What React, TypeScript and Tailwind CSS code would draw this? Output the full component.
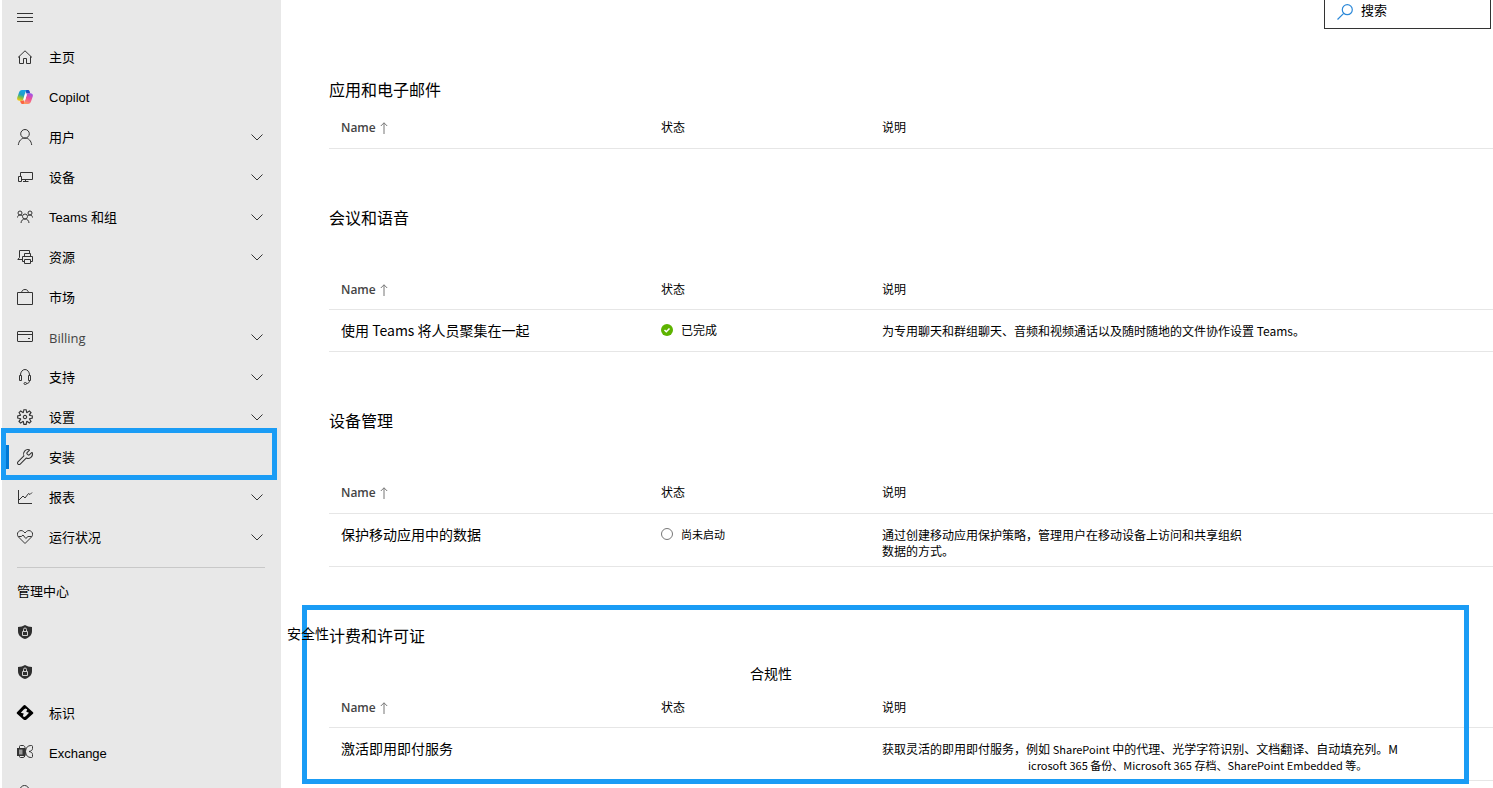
import clsx from "clsx";
import { Wrench } from "lucide-react";
import type { ReactNode } from "react";
import { VscGear } from "react-icons/vsc";

type NavItem = {
  label: string;
  icon: ReactNode;
  expandable?: boolean;
  active?: boolean;
  className?: string;
};

type Setup = {
  name: string;
  status?: "done" | "idle";
  detail: ReactNode;
};

type Section = {
  title: string;
  rows: Setup[];
  compact?: boolean;
  highlighted?: boolean;
};

function Line({ children }: { children: ReactNode }) {
  return (
    <svg className="h-4 w-4" viewBox="0 0 16 16" fill="none" stroke="#333" strokeWidth="1" aria-hidden="true">
      {children}
    </svg>
  );
}

function Copilot() {
  return (
    <svg className="h-4 w-4" viewBox="0 0 16 16" aria-hidden="true">
      <defs>
        <linearGradient id="cpl" x1="0.6" y1="0" x2="0.3" y2="1">
          <stop offset="0" stopColor="#1aa5e8" />
          <stop offset="0.45" stopColor="#1f9fc4" />
          <stop offset="0.7" stopColor="#7cc04a" />
          <stop offset="1" stopColor="#f5c80f" />
        </linearGradient>
        <linearGradient id="cpr" x1="0.7" y1="0" x2="0.3" y2="1">
          <stop offset="0" stopColor="#a052e8" />
          <stop offset="0.45" stopColor="#ee5299" />
          <stop offset="1" stopColor="#ff9a5c" />
        </linearGradient>
      </defs>
      <path d="M8 1h3c1 0 1.400.6 1.700 1.500L13.200 4.500H9.500L8 1Z" fill="#1c4fc4" />
      <path d="M8 15H5.500c-1 0-1.600-.6-1.900-1.500L3 11.500h4l1 3.500Z" fill="#fb6340" />
      <path d="M5 1h5c-.9.300-1.300 1-1.600 2L6.300 10C6 11 5.300 11.700 4.300 11.700H2.500C.8 11.700-.2 10.400.2 8.700L2 3.500C2.500 1.900 3.400 1 5 1Z" fill="url(#cpl)" />
      <path d="M11 15H6c.9-.3 1.300-1 1.600-2l2.100-7C10 5 10.700 4.300 11.700 4.300h1.800c1.700 0 2.700 1.300 2.300 3L14 12.500c-.5 1.600-1.400 2.500-3 2.500Z" fill="url(#cpr)" />
      <path d="M8.700 6 7.600 10" stroke="#fff" strokeWidth="1.800" strokeLinecap="round" />
    </svg>
  );
}

function Shield() {
  return (
    <svg className="h-4 w-4" viewBox="0 0 16 16" aria-hidden="true">
      <path d="M8 1c2 1.300 4.200 1.800 7 1.900V7c0 4-2.500 6.500-7 8-4.500-1.500-7-4-7-8V2.900C3.800 2.800 6 2.300 8 1Z" fill="#2f2f2f" />
      <path d="M5.500 7.500h5v4h-5zM6.500 7.500V5.500a1.500 1.500 0 0 1 3 0v2" fill="none" stroke="#d0d0d0" strokeWidth="1" />
    </svg>
  );
}

function Identity() {
  return (
    <svg className="-ml-px h-[18px] w-[18px]" viewBox="0 0 18 18" aria-hidden="true">
      <path
        d="M9 2 17 9.200c.5.500.5 1.100 0 1.600L10.500 16.500c-.9.700-2.100.7-3 0L1 10.800c-.5-.5-.5-1.100 0-1.600L7.500 2.500C8 2 8.500 1.800 9 2Z"
        fill="#000"
      />
      <path d="m9.300 5.500 1.900.7-.9 2.600 2.700 1-3 3.200-1.600.9-1.600-.7.9-2.700-2.900-.8 3-3.300Z" fill="#e8e8e8" />
    </svg>
  );
}

function Exchange() {
  return (
    <svg className="h-4 w-4" viewBox="0 0 16 16" aria-hidden="true">
      <path d="M2.500 4V2.500c0-.6.4-1 1-1H6c1.800 0 2.500 2.500 2.500 6s-.7 6-2.500 6H3.500c-.6 0-1-.4-1-1V12" fill="none" stroke="#333" />
      <path
        d="M8.500 7.500c.5-4 2-6 6-6 .6 0 1 .4 1 1V4.500c0 1.500-1 2.500-3.500 3 2.500.5 3.500 1.500 3.500 3v2c0 .6-.4 1-1 1-4 0-5.500-2-6-6Z"
        fill="none"
        stroke="#333"
      />
      <path d="M0 4h8v8H0z" fill="#333" />
      <path d="M2 5.500h3.500v5H2z" fill="#999" />
    </svg>
  );
}

const NAV: NavItem[] = [
  {
    label: "主页",
    icon: <Line><path d="M1 8.500 8 1.800l7 6.700M2.500 7.300v7.200h4v-5h3v5h4V7.300" /></Line>,
  },
  { label: "Copilot", icon: <Copilot /> },
  {
    label: "用户",
    expandable: true,
    icon: <Line><circle cx="8" cy="4.800" r="4.300" /><path d="M1.300 16c.5-4.200 3-6.900 6.700-6.900s6.200 2.700 6.700 6.900" /></Line>,
  },
  {
    label: "设备",
    expandable: true,
    icon: <Line><path d="M3.500 7.500v-4h12v7h-11M1.500 7.500h3v5h-3zM6 12.500h5.500M8.500 10.500v2" /></Line>,
  },
  {
    label: "Teams 和组",
    expandable: true,
    icon: (
      <Line>
        <circle cx="3" cy="4" r="2" />
        <circle cx="13" cy="4" r="2" />
        <circle cx="8" cy="7.500" r="2.500" />
        <path d="M.5 8.500C.6 7 1.500 6 3 6c1 0 1.700.4 2.200 1M15.500 8.500C15.400 7 14.500 6 13 6c-1 0-1.700.4-2.200 1M4 14c.2-2.500 1.700-4 4-4s3.800 1.500 4 4" />
      </Line>
    ),
  },
  {
    label: "资源",
    expandable: true,
    icon: (
      <Line>
        <path d="M12.500 4V1.500h-10v7L.8 10.500H5" />
        <path d="M7.500 7.500v-3h6v3M7.500 12.500h-2v-5h10v5h-2M7.500 10.500h6v4h-6z" />
      </Line>
    ),
  },
  {
    label: "市场",
    icon: <Line><path d="M.5 3.500h15v12H.5zM4.500 3.500C5 1.500 6 .5 8 .5s3 1 3.500 3" /></Line>,
  },
  {
    label: "Billing",
    expandable: true,
    className: "font-['Open_Sans','Noto_Sans_CJK_SC',sans-serif] text-[#444]",
    icon: <Line><rect x=".5" y="2.500" width="15" height="10" rx=".5" /><path d="M.5 5.500h15M11 9.500h2" /></Line>,
  },
  {
    label: "支持",
    expandable: true,
    icon: (
      <Line>
        <path d="M3.500 6.500V6a4.500 5.500 0 0 1 9 0v.5M2.500 6.500h2v5h-2zM11.500 6.500h2v5h-2zM12.500 11.500c0 2-1 3-3 3" />
        <ellipse cx="8.300" cy="14.500" rx="1.300" ry="1" />
      </Line>
    ),
  },
  { label: "设置", expandable: true, icon: <VscGear className="-ml-px h-[18px] w-[18px] text-[#333]" /> },
  { label: "安装", active: true, icon: <Wrench className="-ml-px h-[18px] w-[18px] text-[#333]" strokeWidth={1.4} /> },
  {
    label: "报表",
    expandable: true,
    icon: <Line><path d="M1.500 1v13.500H15M2 11l4-4 2 2 3.500-4.500 1.500 1L15 3.500" /></Line>,
  },
  {
    label: "运行状况",
    expandable: true,
    icon: (
      <Line>
        <path d="M8 14.500 1.500 8C0 6.300 0 4 1.500 2.700 3 1.200 5.200 1.200 6.500 2.500L8 4l1.500-1.500c1.300-1.300 3.500-1.300 5 .2C16 4 16 6.300 14.500 8L8 14.500Z" />
        <path d="M1.500 7.500h2.800L6 6l2.800 3.500L11 7.500h3.500" />
      </Line>
    ),
  },
];

// The two shield entries carry their captions out in the content area.
const CENTERS: NavItem[] = [
  { label: "安全性", icon: <Shield />, className: "absolute left-[285px] pt-1 text-[14px] whitespace-nowrap" },
  { label: "合规性", icon: <Shield />, className: "absolute left-[748px] pt-1 text-[14px] whitespace-nowrap" },
  { label: "标识", icon: <Identity />, className: "pt-1" },
  { label: "Exchange", icon: <Exchange />, className: "pt-1" },
  { label: "", icon: <Line><circle cx="7.500" cy="6" r="4.500" /></Line> },
];

const SECTIONS: Section[] = [
  { title: "应用和电子邮件", rows: [], compact: true },
  {
    title: "会议和语音",
    rows: [
      {
        name: "使用 Teams 将人员聚集在一起",
        status: "done",
        detail: "为专用聊天和群组聊天、音频和视频通话以及随时随地的文件协作设置 Teams。",
      },
    ],
  },
  {
    title: "设备管理",
    rows: [
      {
        name: "保护移动应用中的数据",
        status: "idle",
        detail: (
          <>
            通过创建移动应用保护策略，管理用户在移动设备上访问和共享组织
            <br />
            数据的方式。
          </>
        ),
      },
    ],
  },
  {
    title: "计费和许可证",
    highlighted: true,
    rows: [
      {
        name: "激活即用即付服务",
        detail: (
          <>
            获取灵活的即用即付服务，例如 <span className="text-[11px]">SharePoint</span>{" "}
            中的代理、光学字符识别、文档翻译、自动填充列。M
            <span className="block pl-[146px] text-[11px]">
              icrosoft 365 备份、Microsoft 365 存档、SharePoint Embedded 等。
            </span>
          </>
        ),
      },
    ],
  },
];

function NavRow({ item }: { item: NavItem }) {
  return (
    <li className="relative">
      {item.active && (
        <>
          <span className="absolute top-2 left-1 h-6 w-[3px] bg-[#0078d4]" />
          <span className="pointer-events-none absolute -top-[9px] right-1 -bottom-[3px] -left-px border-[5px] border-[#1a9cf5]" />
        </>
      )}
      <button type="button" className="flex h-10 w-full items-center pr-[18px] pl-[15px] text-left">
        <span className="flex w-8 shrink-0 items-center">{item.icon}</span>
        <span className={clsx("leading-5", item.className?.includes("pt-") ? "" : "pt-0.5", item.className)}>
          {item.label}
        </span>
        {item.expandable && (
          <svg className="ml-auto h-3 w-3" viewBox="0 0 12 12" fill="none" stroke="#333" aria-hidden="true">
            <path d="m.5 3.500 5.500 5.500 5.500-5.500" />
          </svg>
        )}
      </button>
    </li>
  );
}

function Status({ value }: { value: "done" | "idle" }) {
  if (value === "done") {
    return (
      <span className="flex items-center gap-2">
        <svg className="h-3 w-3" viewBox="0 0 12 12" aria-hidden="true">
          <circle cx="6" cy="6" r="6" fill="#5db300" />
          <path d="m3.500 6 1.800 1.800L8.500 4.500" fill="none" stroke="#fff" strokeWidth="1.500" />
        </svg>
        已完成
      </span>
    );
  }
  return (
    <span className="flex items-center gap-2 text-[11px]">
      <svg className="h-3 w-3" viewBox="0 0 12 12" aria-hidden="true">
        <circle cx="6" cy="6" r="5.500" fill="none" stroke="#777" />
      </svg>
      尚未启动
    </span>
  );
}

function SetupSection({ section }: { section: Section }) {
  return (
    <section className="relative">
      <h2 className={clsx("text-[16px] leading-8", section.compact ? "mb-0.5" : "mb-9")}>{section.title}</h2>
      <table className="w-full table-fixed text-left text-[12px] leading-4">
        <colgroup>
          <col className="w-[320px]" />
          <col className="w-[221px]" />
          <col />
        </colgroup>
        <thead>
          <tr className="h-[41px] border-b border-[#e6e6e6]">
            <th className="pl-3 font-['Open_Sans',sans-serif] font-semibold text-[#444]">
              <button type="button" className="flex items-center gap-1 pt-0.5">
                Name
                <svg className="h-3 w-2" viewBox="0 0 8 12" fill="none" stroke="#777" aria-hidden="true">
                  <path d="M4 12V.8M.8 4 4 .8 7.200 4" />
                </svg>
              </button>
            </th>
            <th className="pl-3 font-normal">状态</th>
            <th className="pl-3 font-normal">说明</th>
          </tr>
        </thead>
        <tbody>
          {section.rows.map((row) => (
            <tr
              key={row.name}
              className={clsx("border-b border-[#e6e6e6] align-top", row.status === "done" ? "h-[42px]" : "h-[53px]")}
            >
              <td className="pt-3 pl-3 text-[14px]">{row.name}</td>
              <td className="pt-3 pl-3">{row.status && <Status value={row.status} />}</td>
              <td className="pt-[13px] pl-3">{row.detail}</td>
            </tr>
          ))}
        </tbody>
      </table>
      {section.highlighted && (
        <div className="pointer-events-none absolute -top-3.5 right-6 -bottom-[3px] -left-[27px] border-[5px] border-[#1a9cf5]" />
      )}
    </section>
  );
}

export default function App() {
  return (
    <div className="flex h-screen overflow-hidden bg-white pl-0.5 font-['Noto_Sans_CJK_SC',sans-serif] text-black">
      <nav className="relative z-10 w-[279px] shrink-0 bg-[#e8e8e8] font-['Liberation_Sans','Noto_Sans_CJK_SC',sans-serif] text-[13px]">
        <button type="button" aria-label="菜单" className="block h-[37px] px-[15px] pb-1">
          <svg className="h-4 w-4" viewBox="0 0 16 16" stroke="#333" aria-hidden="true">
            <path d="M0 4.500h16M0 8.500h16M0 12.500h16" />
          </svg>
        </button>
        <ul>
          {NAV.map((item) => (
            <NavRow key={item.label} item={item} />
          ))}
        </ul>
        <hr className="mt-2.5 mr-4 ml-[15px] border-[#c8c8c8]" />
        <h2 className="mt-1 pl-[15px] leading-10">管理中心</h2>
        <ul>
          {CENTERS.map((item) => (
            <NavRow key={item.label} item={item} />
          ))}
        </ul>
      </nav>
      <main className="flex min-w-0 flex-1 flex-col pl-12">
        <label className="mr-0.5 flex h-[29px] w-[167px] shrink-0 items-start gap-2 self-end border border-t-0 border-[#333] pt-0.5 pl-3">
          <svg
            className="mt-0.5 h-4 w-4 shrink-0"
            viewBox="0 0 16 16"
            fill="none"
            stroke="#2b88d8"
            strokeWidth="1.200"
            aria-hidden="true"
          >
            <circle cx="10.300" cy="5.700" r="5" />
            <path d="M6.700 9.300.5 15.500" />
          </svg>
          <input
            type="search"
            aria-label="搜索"
            placeholder="搜索"
            className="h-4 w-full min-w-0 bg-transparent text-[13px] leading-4 outline-none placeholder:text-black"
          />
        </label>
        <div className="flex flex-col gap-[52px] pt-11">
          {SECTIONS.map((section) => (
            <SetupSection key={section.title} section={section} />
          ))}
        </div>
      </main>
    </div>
  );
}
